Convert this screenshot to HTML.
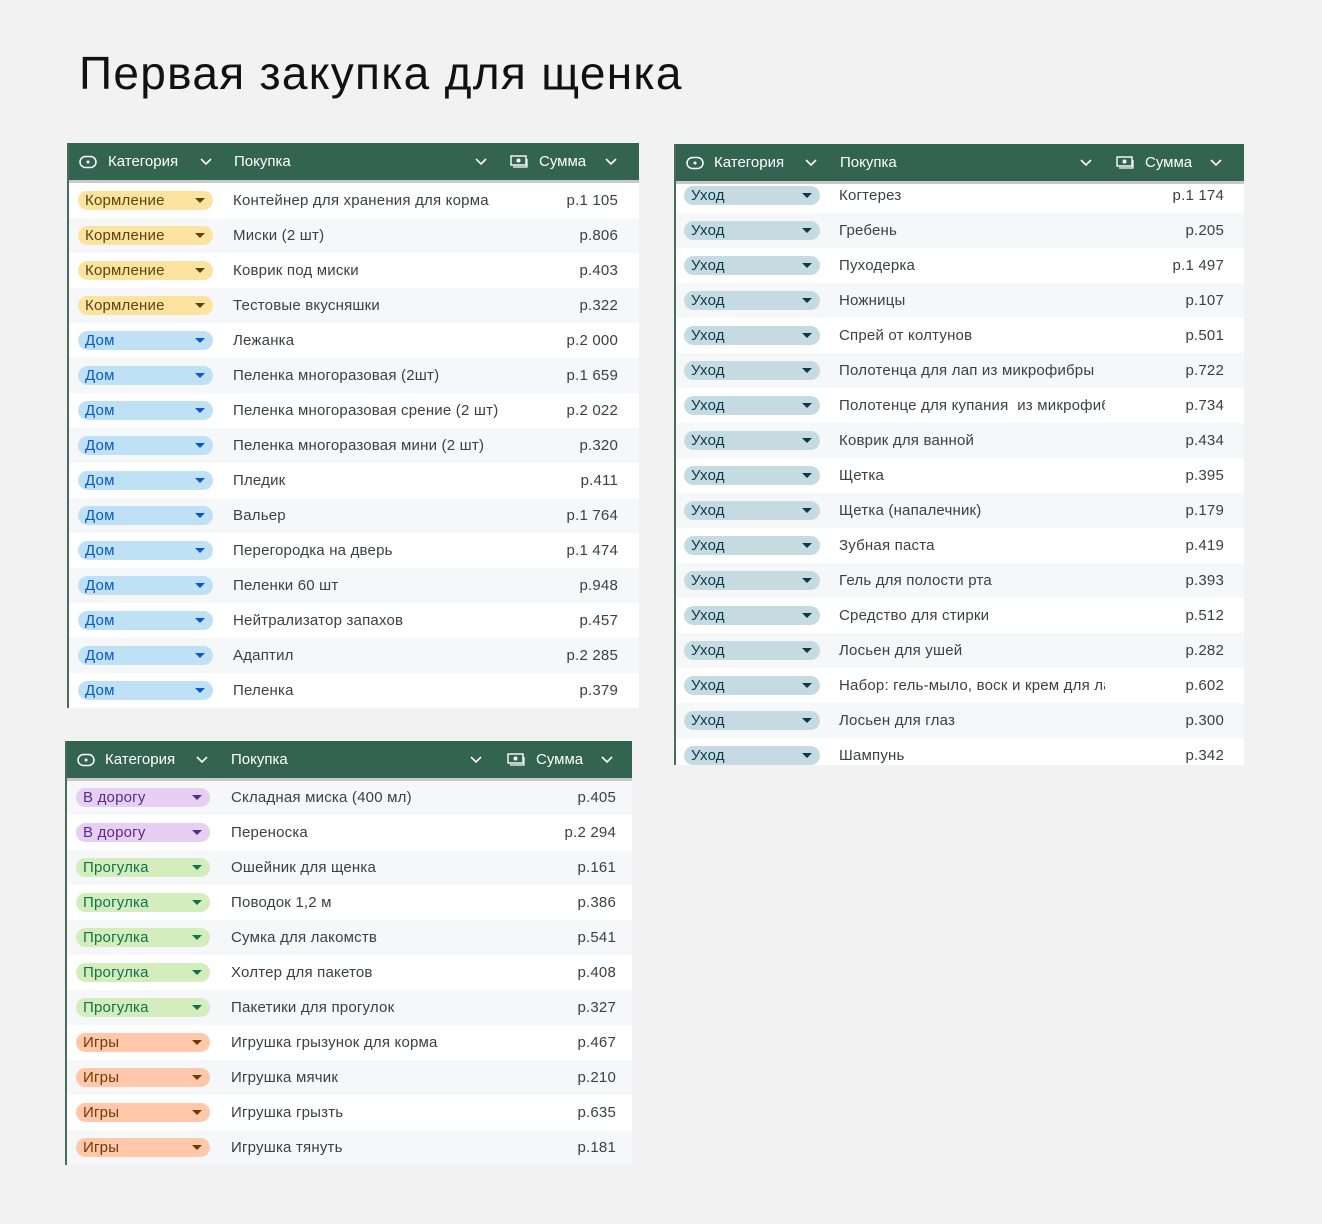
<!DOCTYPE html>
<html><head><meta charset="utf-8"><style>
*{margin:0;padding:0;box-sizing:border-box}
body{width:1322px;height:1224px;background:#f2f2f2;font-family:"Liberation Sans","DejaVu Sans",sans-serif;position:relative;overflow:hidden;color:#3c4043}
h1{position:absolute;left:79px;top:46px;font-size:46px;font-weight:400;color:#111;letter-spacing:1.3px}
.t{position:absolute;background:#fff;border-left:2px solid #4b6b5e}
.hd{position:absolute;left:0;right:0;top:0;height:37px;background:#33644f;color:#fff;font-size:15px;z-index:2;border-bottom:3px solid #c8c8c8;box-sizing:content-box}
.hd span{position:absolute;top:10px}
.hd svg{position:absolute}
.r{position:absolute;left:0;right:0;height:35px;font-size:15px;letter-spacing:0.2px}
.r.g{background:#f6f7f9}
.p{position:absolute;top:8px;height:19px;border-radius:10px;font-size:15px;line-height:19px;padding-left:7px}
.p:after{content:"";position:absolute;right:8px;top:7px;border-left:5px solid transparent;border-right:5px solid transparent;border-top:5px solid currentColor}
.n{position:absolute;top:9px}
.a{position:absolute;top:9px;text-align:right}
.k{background:#fde3a0;color:#5b4410}
.d{background:#bfe1f6;color:#0b57d0}
.u{background:#c6dbe1;color:#0a3a4a}
.v{background:#e6cff2;color:#5a2b8a}
.w{background:#d4edbc;color:#11734b}
.i{background:#ffc8aa;color:#753800}
</style></head><body>
<h1>Первая закупка для щенка</h1>

<!-- table 1 -->
<div class="t" style="left:67px;top:143px;width:572px;height:565px">
<div class="hd">
<svg style="left:10px;top:12px" width="18" height="14" viewBox="0 0 18 14"><rect x="1" y="1.5" width="16" height="11" rx="5.5" fill="none" stroke="#fff" stroke-width="1.5"/><circle cx="9" cy="7" r="1.5" fill="#fff"/></svg>
<span style="left:39px">Категория</span>
<svg style="left:131px;top:15px" width="12" height="8"><path d="M1 1l5 5 5-5" fill="none" stroke="#fff" stroke-width="1.6"/></svg>
<span style="left:165px">Покупка</span>
<svg style="left:406px;top:15px" width="12" height="8"><path d="M1 1l5 5 5-5" fill="none" stroke="#fff" stroke-width="1.6"/></svg>
<svg style="left:441px;top:12px" width="18" height="13"><rect x="1" y="1" width="15" height="9" fill="none" stroke="#fff" stroke-width="1.4"/><circle cx="8.5" cy="5.5" r="2" fill="#fff"/><path d="M3 12h14V4" fill="none" stroke="#fff" stroke-width="1.2"/></svg>
<span style="left:470px">Сумма</span>
<svg style="left:536px;top:15px" width="12" height="8"><path d="M1 1l5 5 5-5" fill="none" stroke="#fff" stroke-width="1.6"/></svg>
</div>
<div class="r" style="top:40px"><div class="p k" style="left:9px;width:135px">Кормление</div><div class="n" style="left:164px">Контейнер для хранения для корма</div><div class="a" style="right:21px">р.1 105</div></div>
<div class="r g" style="top:75px"><div class="p k" style="left:9px;width:135px">Кормление</div><div class="n" style="left:164px">Миски (2 шт)</div><div class="a" style="right:21px">р.806</div></div>
<div class="r" style="top:110px"><div class="p k" style="left:9px;width:135px">Кормление</div><div class="n" style="left:164px">Коврик под миски</div><div class="a" style="right:21px">р.403</div></div>
<div class="r g" style="top:145px"><div class="p k" style="left:9px;width:135px">Кормление</div><div class="n" style="left:164px">Тестовые вкусняшки</div><div class="a" style="right:21px">р.322</div></div>
<div class="r" style="top:180px"><div class="p d" style="left:9px;width:135px">Дом</div><div class="n" style="left:164px">Лежанка</div><div class="a" style="right:21px">р.2 000</div></div>
<div class="r g" style="top:215px"><div class="p d" style="left:9px;width:135px">Дом</div><div class="n" style="left:164px">Пеленка многоразовая (2шт)</div><div class="a" style="right:21px">р.1 659</div></div>
<div class="r" style="top:250px"><div class="p d" style="left:9px;width:135px">Дом</div><div class="n" style="left:164px;width:266px;overflow:hidden;white-space:nowrap">Пеленка многоразовая срение (2 шт)</div><div class="a" style="right:21px">р.2 022</div></div>
<div class="r g" style="top:285px"><div class="p d" style="left:9px;width:135px">Дом</div><div class="n" style="left:164px">Пеленка многоразовая мини (2 шт)</div><div class="a" style="right:21px">р.320</div></div>
<div class="r" style="top:320px"><div class="p d" style="left:9px;width:135px">Дом</div><div class="n" style="left:164px">Пледик</div><div class="a" style="right:21px">р.411</div></div>
<div class="r g" style="top:355px"><div class="p d" style="left:9px;width:135px">Дом</div><div class="n" style="left:164px">Вальер</div><div class="a" style="right:21px">р.1 764</div></div>
<div class="r" style="top:390px"><div class="p d" style="left:9px;width:135px">Дом</div><div class="n" style="left:164px">Перегородка на дверь</div><div class="a" style="right:21px">р.1 474</div></div>
<div class="r g" style="top:425px"><div class="p d" style="left:9px;width:135px">Дом</div><div class="n" style="left:164px">Пеленки 60 шт</div><div class="a" style="right:21px">р.948</div></div>
<div class="r" style="top:460px"><div class="p d" style="left:9px;width:135px">Дом</div><div class="n" style="left:164px">Нейтрализатор запахов</div><div class="a" style="right:21px">р.457</div></div>
<div class="r g" style="top:495px"><div class="p d" style="left:9px;width:135px">Дом</div><div class="n" style="left:164px">Адаптил</div><div class="a" style="right:21px">р.2 285</div></div>
<div class="r" style="top:530px"><div class="p d" style="left:9px;width:135px">Дом</div><div class="n" style="left:164px">Пеленка</div><div class="a" style="right:21px">р.379</div></div>
</div>

<!-- table 2 -->
<div class="t" style="left:674px;top:144px;width:570px;height:621px;overflow:hidden">
<div class="r" style="top:34px"><div class="p u" style="left:8px;width:136px">Уход</div><div class="n" style="left:163px">Когтерез</div><div class="a" style="right:20px">р.1 174</div></div>
<div class="r g" style="top:69px"><div class="p u" style="left:8px;width:136px">Уход</div><div class="n" style="left:163px">Гребень</div><div class="a" style="right:20px">р.205</div></div>
<div class="r" style="top:104px"><div class="p u" style="left:8px;width:136px">Уход</div><div class="n" style="left:163px">Пуходерка</div><div class="a" style="right:20px">р.1 497</div></div>
<div class="r g" style="top:139px"><div class="p u" style="left:8px;width:136px">Уход</div><div class="n" style="left:163px">Ножницы</div><div class="a" style="right:20px">р.107</div></div>
<div class="r" style="top:174px"><div class="p u" style="left:8px;width:136px">Уход</div><div class="n" style="left:163px">Спрей от колтунов</div><div class="a" style="right:20px">р.501</div></div>
<div class="r g" style="top:209px"><div class="p u" style="left:8px;width:136px">Уход</div><div class="n" style="left:163px">Полотенца для лап из микрофибры</div><div class="a" style="right:20px">р.722</div></div>
<div class="r" style="top:244px"><div class="p u" style="left:8px;width:136px">Уход</div><div class="n" style="left:163px;width:266px;overflow:hidden;white-space:nowrap">Полотенце для купания&nbsp; из микрофибры</div><div class="a" style="right:20px">р.734</div></div>
<div class="r g" style="top:279px"><div class="p u" style="left:8px;width:136px">Уход</div><div class="n" style="left:163px">Коврик для ванной</div><div class="a" style="right:20px">р.434</div></div>
<div class="r" style="top:314px"><div class="p u" style="left:8px;width:136px">Уход</div><div class="n" style="left:163px">Щетка</div><div class="a" style="right:20px">р.395</div></div>
<div class="r g" style="top:349px"><div class="p u" style="left:8px;width:136px">Уход</div><div class="n" style="left:163px">Щетка (напалечник)</div><div class="a" style="right:20px">р.179</div></div>
<div class="r" style="top:384px"><div class="p u" style="left:8px;width:136px">Уход</div><div class="n" style="left:163px">Зубная паста</div><div class="a" style="right:20px">р.419</div></div>
<div class="r g" style="top:419px"><div class="p u" style="left:8px;width:136px">Уход</div><div class="n" style="left:163px">Гель для полости рта</div><div class="a" style="right:20px">р.393</div></div>
<div class="r" style="top:454px"><div class="p u" style="left:8px;width:136px">Уход</div><div class="n" style="left:163px">Средство для стирки</div><div class="a" style="right:20px">р.512</div></div>
<div class="r g" style="top:489px"><div class="p u" style="left:8px;width:136px">Уход</div><div class="n" style="left:163px">Лосьен для ушей</div><div class="a" style="right:20px">р.282</div></div>
<div class="r" style="top:524px"><div class="p u" style="left:8px;width:136px">Уход</div><div class="n" style="left:163px;width:266px;overflow:hidden;white-space:nowrap">Набор: гель-мыло, воск и крем для лап</div><div class="a" style="right:20px">р.602</div></div>
<div class="r g" style="top:559px"><div class="p u" style="left:8px;width:136px">Уход</div><div class="n" style="left:163px">Лосьен для глаз</div><div class="a" style="right:20px">р.300</div></div>
<div class="r" style="top:594px"><div class="p u" style="left:8px;width:136px">Уход</div><div class="n" style="left:163px">Шампунь</div><div class="a" style="right:20px">р.342</div></div>
<div class="hd">
<svg style="left:10px;top:12px" width="18" height="14" viewBox="0 0 18 14"><rect x="1" y="1.5" width="16" height="11" rx="5.5" fill="none" stroke="#fff" stroke-width="1.5"/><circle cx="9" cy="7" r="1.5" fill="#fff"/></svg>
<span style="left:38px">Категория</span>
<svg style="left:129px;top:15px" width="12" height="8"><path d="M1 1l5 5 5-5" fill="none" stroke="#fff" stroke-width="1.6"/></svg>
<span style="left:164px">Покупка</span>
<svg style="left:404px;top:15px" width="12" height="8"><path d="M1 1l5 5 5-5" fill="none" stroke="#fff" stroke-width="1.6"/></svg>
<svg style="left:440px;top:12px" width="18" height="13"><rect x="1" y="1" width="15" height="9" fill="none" stroke="#fff" stroke-width="1.4"/><circle cx="8.5" cy="5.5" r="2" fill="#fff"/><path d="M3 12h14V4" fill="none" stroke="#fff" stroke-width="1.2"/></svg>
<span style="left:469px">Сумма</span>
<svg style="left:534px;top:15px" width="12" height="8"><path d="M1 1l5 5 5-5" fill="none" stroke="#fff" stroke-width="1.6"/></svg>
</div>
</div>

<!-- table 3 -->
<div class="t" style="left:65px;top:741px;width:567px;height:424px">
<div class="hd">
<svg style="left:10px;top:12px" width="18" height="14" viewBox="0 0 18 14"><rect x="1" y="1.5" width="16" height="11" rx="5.5" fill="none" stroke="#fff" stroke-width="1.5"/><circle cx="9" cy="7" r="1.5" fill="#fff"/></svg>
<span style="left:38px">Категория</span>
<svg style="left:129px;top:15px" width="12" height="8"><path d="M1 1l5 5 5-5" fill="none" stroke="#fff" stroke-width="1.6"/></svg>
<span style="left:164px">Покупка</span>
<svg style="left:403px;top:15px" width="12" height="8"><path d="M1 1l5 5 5-5" fill="none" stroke="#fff" stroke-width="1.6"/></svg>
<svg style="left:440px;top:12px" width="18" height="13"><rect x="1" y="1" width="15" height="9" fill="none" stroke="#fff" stroke-width="1.4"/><circle cx="8.5" cy="5.5" r="2" fill="#fff"/><path d="M3 12h14V4" fill="none" stroke="#fff" stroke-width="1.2"/></svg>
<span style="left:469px">Сумма</span>
<svg style="left:534px;top:15px" width="12" height="8"><path d="M1 1l5 5 5-5" fill="none" stroke="#fff" stroke-width="1.6"/></svg>
</div>
<div class="r g" style="top:39px"><div class="p v" style="left:9px;width:134px">В дорогу</div><div class="n" style="left:164px">Складная миска (400 мл)</div><div class="a" style="right:16px">р.405</div></div>
<div class="r" style="top:74px"><div class="p v" style="left:9px;width:134px">В дорогу</div><div class="n" style="left:164px">Переноска</div><div class="a" style="right:16px">р.2 294</div></div>
<div class="r g" style="top:109px"><div class="p w" style="left:9px;width:134px">Прогулка</div><div class="n" style="left:164px">Ошейник для щенка</div><div class="a" style="right:16px">р.161</div></div>
<div class="r" style="top:144px"><div class="p w" style="left:9px;width:134px">Прогулка</div><div class="n" style="left:164px">Поводок 1,2 м</div><div class="a" style="right:16px">р.386</div></div>
<div class="r g" style="top:179px"><div class="p w" style="left:9px;width:134px">Прогулка</div><div class="n" style="left:164px">Сумка для лакомств</div><div class="a" style="right:16px">р.541</div></div>
<div class="r" style="top:214px"><div class="p w" style="left:9px;width:134px">Прогулка</div><div class="n" style="left:164px">Холтер для пакетов</div><div class="a" style="right:16px">р.408</div></div>
<div class="r g" style="top:249px"><div class="p w" style="left:9px;width:134px">Прогулка</div><div class="n" style="left:164px">Пакетики для прогулок</div><div class="a" style="right:16px">р.327</div></div>
<div class="r" style="top:284px"><div class="p i" style="left:9px;width:134px">Игры</div><div class="n" style="left:164px">Игрушка грызунок для корма</div><div class="a" style="right:16px">р.467</div></div>
<div class="r g" style="top:319px"><div class="p i" style="left:9px;width:134px">Игры</div><div class="n" style="left:164px">Игрушка мячик</div><div class="a" style="right:16px">р.210</div></div>
<div class="r" style="top:354px"><div class="p i" style="left:9px;width:134px">Игры</div><div class="n" style="left:164px">Игрушка грызть</div><div class="a" style="right:16px">р.635</div></div>
<div class="r g" style="top:389px"><div class="p i" style="left:9px;width:134px">Игры</div><div class="n" style="left:164px">Игрушка тянуть</div><div class="a" style="right:16px">р.181</div></div>
</div>
</body></html>
